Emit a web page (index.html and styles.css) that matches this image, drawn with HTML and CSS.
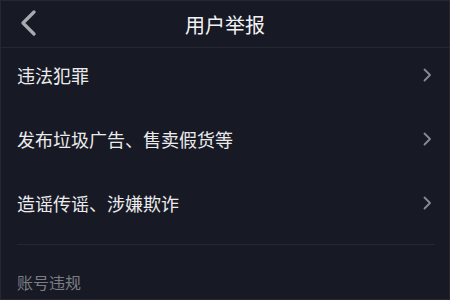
FILE: index.html
```html
<!DOCTYPE html>
<html lang="zh-CN">
    <head>
        <meta charset="UTF-8">
        <meta name="viewport" content="width=device-width,initial-scale=1.0">
        <title>用户举报</title>
        <link rel="stylesheet" href="styles.css">
    </head>
    <body>
        <main class="page">
            <header class="topbar">
                <button class="back">
                    <svg width="17" height="26" viewBox="0 0 17 26">
                        <path d="M14 2 L3 13 L14 24" fill="none" stroke="#a9aaae" stroke-width="3.2" stroke-linecap="round" stroke-linejoin="round"/>
                    </svg>
                </button>
                <h1 class="title">用户举报</h1>
            </header>
            <div class="list">
                <div class="item">
                    <span class="label">违法犯罪</span>
                    <svg class="arrow" width="9" height="14" viewBox="0 0 9 14">
                        <path d="M1.5 1.5 L7 7 L1.5 12.5" fill="none" stroke="#8a8b91" stroke-width="1.8" stroke-linecap="round" stroke-linejoin="round"/>
                    </svg>
                </div>
                <div class="item">
                    <span class="label">发布垃圾广告、售卖假货等</span>
                    <svg class="arrow" width="9" height="14" viewBox="0 0 9 14">
                        <path d="M1.5 1.5 L7 7 L1.5 12.5" fill="none" stroke="#8a8b91" stroke-width="1.8" stroke-linecap="round" stroke-linejoin="round"/>
                    </svg>
                </div>
                <div class="item">
                    <span class="label">造谣传谣、涉嫌欺诈</span>
                    <svg class="arrow" width="9" height="14" viewBox="0 0 9 14">
                        <path d="M1.5 1.5 L7 7 L1.5 12.5" fill="none" stroke="#8a8b91" stroke-width="1.8" stroke-linecap="round" stroke-linejoin="round"/>
                    </svg>
                </div>
            </div>
            <div class="divider"></div>
            <p class="section">账号违规</p>
        </main>
    </body>
</html>
```

FILE: styles.css
```css
*{
    margin: 0;
    padding: 0;
    box-sizing: border-box;
}
body{
    background-color: #171924;
    font-family: "Noto Sans CJK SC", "Noto Sans", sans-serif;
    color: #ebebed;
}
.page{
    width: 450px;
    height: 300px;
    border: 1px solid #252733;
    overflow: hidden;
}
.topbar{
    height: 47px;
    border-bottom: 1px solid #252733;
    display: flex;
    justify-content: center;
    align-items: center;
    position: relative;
}
.back{
    position: absolute;
    left: 19px;
    top: 9px;
    background: none;
    border: none;
    display: flex;
}
.title{
    font-size: 20px;
    font-weight: normal;
    color: #f2f2f4;
}
.item{
    height: 64px;
    padding: 0 16px 10px 16px;
    display: flex;
    justify-content: space-between;
    align-items: center;
}
.label{
    font-size: 18px;
}
.arrow{
    margin-right: 1px;
}
.divider{
    margin: 4px 14px 0 16px;
    height: 1px;
    background-color: #252733;
}
.section{
    padding: 25px 16px 0 16px;
    font-size: 16px;
    color: #7c7d84;
}
```
